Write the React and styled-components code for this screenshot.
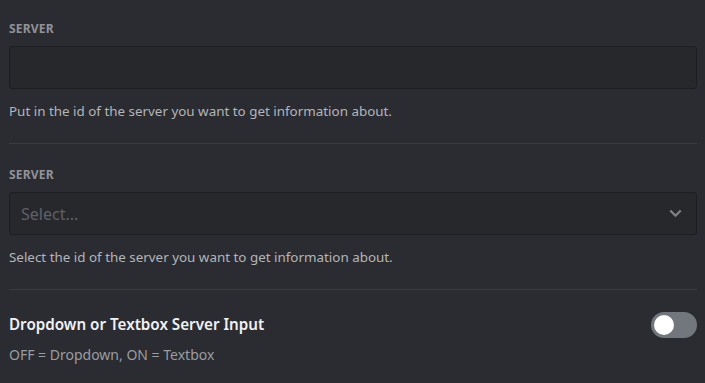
import React from "react";
import styled, { createGlobalStyle } from "styled-components";

const Global = createGlobalStyle`
  html, body { margin: 0; padding: 0; background: #2b2c31; }
  body { font-family: "Noto Sans", "Open Sans", sans-serif; }
`;

const Page = styled.div`
  width: 705px;
  height: 383px;
  box-sizing: border-box;
  padding: 21px 8px 0 9px;
  background: #2b2c31;
  overflow: hidden;
`;

const Field = styled.section`
  display: flex;
  flex-direction: column;
  padding-bottom: 23px;
  margin-bottom: 23px;
  border-bottom: 1px solid #3a3b40;
`;

const Label = styled.div`
  font-size: 12px;
  font-weight: 700;
  letter-spacing: 0.2px;
  color: #909298;
  line-height: 16px;
  margin-bottom: 9px;
`;

const InputBox = styled.div`
  height: 43px;
  box-sizing: border-box;
  background: #27282c;
  border: 1px solid #1d1e21;
  border-radius: 3px;
  display: flex;
  align-items: center;
  justify-content: space-between;
  padding: 0 14px 0 11px;
`;

const Placeholder = styled.span`
  color: #5f6166;
  font-size: 16px;
`;

const Help = styled.div`
  margin-top: 13px;
  font-size: 13.4px;
  color: #b3b5b9;
  line-height: 18px;
`;

const ToggleRow = styled.div`
  display: flex;
  justify-content: space-between;
  align-items: flex-start;
`;

const Title = styled.div`
  font-size: 15.2px;
  font-weight: 600;
  color: #f0f1f3;
  line-height: 22px;
`;

const Sub = styled.div`
  margin-top: 11px;
  font-size: 14px;
  color: #9a9ca1;
  line-height: 18px;
`;

const Switch = styled.div`
  width: 46px;
  height: 26px;
  border-radius: 13px;
  background: #72767d;
  position: relative;
  margin-top: -1px;
`;

const Knob = styled.div`
  position: absolute;
  left: 3px;
  top: 3px;
  width: 20px;
  height: 20px;
  border-radius: 50%;
  background: #ffffff;
`;

const Chevron = () => (
  <svg width="13" height="9" viewBox="0 0 13 9">
    <path d="M1.3 1.5 L6.5 6.7 L11.7 1.5" fill="none" stroke="#808287" strokeWidth="2.3" />
  </svg>
);

export default function App() {
  return (
    <Page>
      <Global />
      <Field>
        <Label>SERVER</Label>
        <InputBox />
        <Help>Put in the id of the server you want to get information about.</Help>
      </Field>
      <Field>
        <Label>SERVER</Label>
        <InputBox>
          <Placeholder>Select...</Placeholder>
          <Chevron />
        </InputBox>
        <Help>Select the id of the server you want to get information about.</Help>
      </Field>
      <ToggleRow>
        <div>
          <Title>Dropdown or Textbox Server Input</Title>
          <Sub>OFF = Dropdown, ON = Textbox</Sub>
        </div>
        <Switch>
          <Knob />
        </Switch>
      </ToggleRow>
    </Page>
  );
}
